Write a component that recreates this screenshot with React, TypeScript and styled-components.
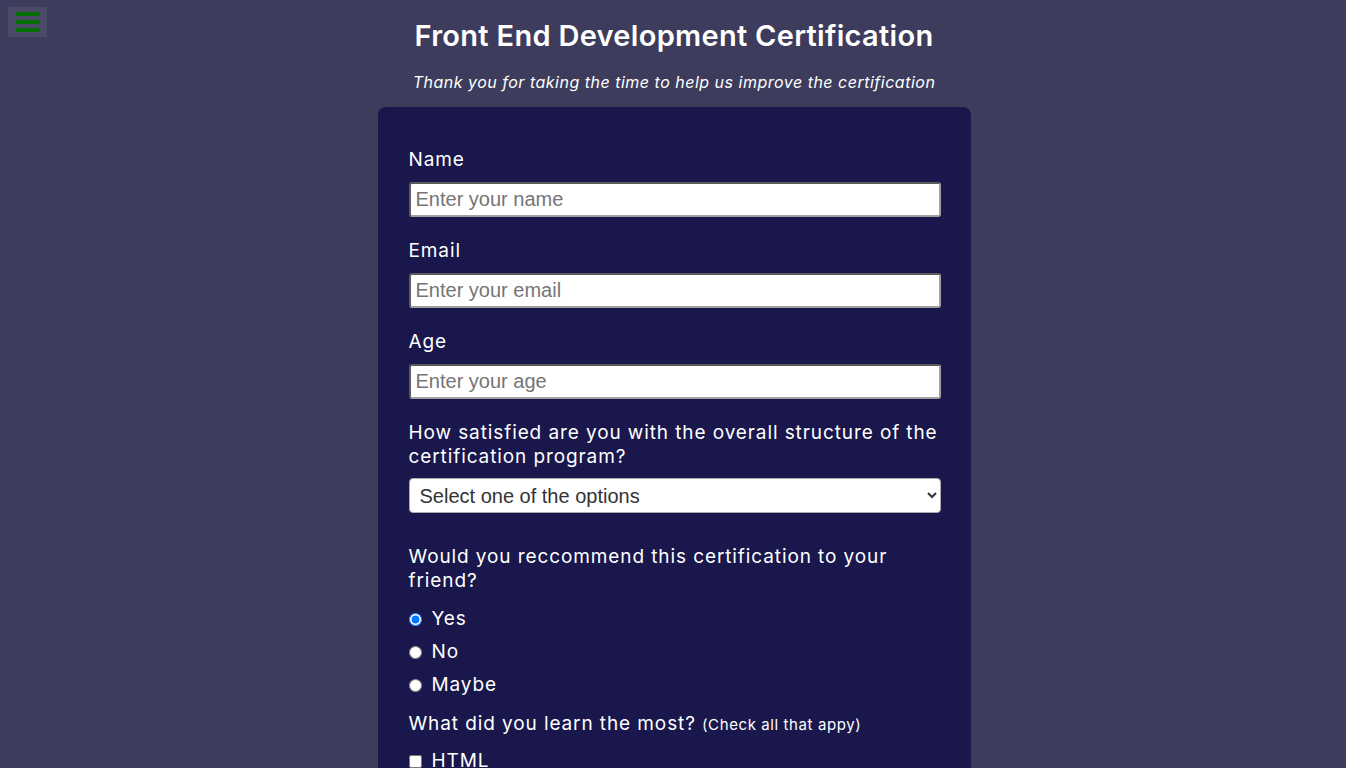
import * as React from 'react';
import styled, { createGlobalStyle } from 'styled-components';

const GlobalStyle = createGlobalStyle`
  body {
    margin: 0;
    background: #3d3c5c;
    font-family: Inter, "Open Sans", sans-serif;
    color: #fff;
  }
`;

const MenuButton = styled.button`
  position: absolute;
  top: 7px;
  left: 8px;
  width: 39px;
  height: 30px;
  border: none;
  padding: 0;
  background: #4b4a68;
  display: flex;
  flex-direction: column;
  justify-content: center;
  align-items: center;
  gap: 4px;
`;

const Bar = styled.span`
  display: block;
  width: 25px;
  height: 4px;
  border-radius: 2px;
  background: #037003;
`;

const Page = styled.main`
  display: flex;
  flex-direction: column;
  align-items: center;
  padding: 18px 0 0 2px;
`;

const Title = styled.h1`
  margin: 0;
  font-size: 29px;
  font-weight: 600;
  letter-spacing: 0.3px;
  line-height: 36px;
`;

const Subtitle = styled.p`
  margin: 17px 0 14px;
  font-size: 16px;
  font-style: italic;
  letter-spacing: 0.5px;
  line-height: 22px;
`;

const Card = styled.form`
  width: 593px;
  box-sizing: border-box;
  background: #19174b;
  border-radius: 8px;
  padding: 41px 30px 30px 31px;
  display: flex;
  flex-direction: column;
`;

const Field = styled.div<{ $gap?: number }>`
  display: flex;
  flex-direction: column;
  margin-bottom: ${p => p.$gap ?? 22}px;
`;

const Label = styled.label<{ $after?: number }>`
  font-size: 19px;
  letter-spacing: 0.9px;
  line-height: 24px;
  margin-bottom: ${p => p.$after ?? 10}px;
`;

const Small = styled.span`
  font-size: 15px;
  letter-spacing: 0.6px;
`;

const TextInput = styled.input`
  height: 35px;
  box-sizing: border-box;
  border: 2px solid #5c5c5c;
  border-right-color: #a0a0a0;
  border-bottom-color: #a0a0a0;
  border-radius: 3px;
  padding: 0 5px;
  font-family: "Liberation Sans", Arial, sans-serif;
  font-size: 20px;
  color: #333;
  &::placeholder {
    color: #757575;
  }
`;

const Select = styled.select`
  height: 35px;
  border: 1px solid #aaa;
  border-radius: 4px;
  padding: 0 6px;
  font-family: "Liberation Sans", Arial, sans-serif;
  font-size: 20px;
  color: #333;
  background: #fff;
`;

const Option = styled.label`
  display: flex;
  align-items: center;
  gap: 10px;
  font-size: 19px;
  letter-spacing: 0.9px;
  line-height: 24px;
  margin-bottom: 9px;
  input {
    margin: 0;
    width: 13px;
    height: 13px;
  }
`;

export default function App() {
  return (
    <>
      <GlobalStyle />
      <MenuButton aria-label="menu">
        <Bar />
        <Bar />
        <Bar />
      </MenuButton>
      <Page>
        <Title>Front End Development Certification</Title>
        <Subtitle>Thank you for taking the time to help us improve the certification</Subtitle>
        <Card>
          <Field>
            <Label>Name</Label>
            <TextInput placeholder="Enter your name" />
          </Field>
          <Field>
            <Label>Email</Label>
            <TextInput placeholder="Enter your email" />
          </Field>
          <Field>
            <Label>Age</Label>
            <TextInput placeholder="Enter your age" />
          </Field>
          <Field $gap={32}>
            <Label $after={9}>
              How satisfied are you with the overall structure of the certification program?
            </Label>
            <Select defaultValue="">
              <option value="">Select one of the options</option>
              <option>Very satisfied</option>
              <option>Satisfied</option>
              <option>Not satisfied</option>
            </Select>
          </Field>
          <Field $gap={6}>
            <Label $after={14}>Would you reccommend this certification to your friend?</Label>
            <Option><input type="radio" name="rec" defaultChecked /> Yes</Option>
            <Option><input type="radio" name="rec" /> No</Option>
            <Option><input type="radio" name="rec" /> Maybe</Option>
          </Field>
          <Field $gap={0}>
            <Label $after={12}>
              What did you learn the most? <Small>(Check all that appy)</Small>
            </Label>
            <Option><input type="checkbox" /> HTML</Option>
            <Option><input type="checkbox" /> CSS</Option>
            <Option><input type="checkbox" /> JavaScript</Option>
          </Field>
        </Card>
      </Page>
    </>
  );
}
